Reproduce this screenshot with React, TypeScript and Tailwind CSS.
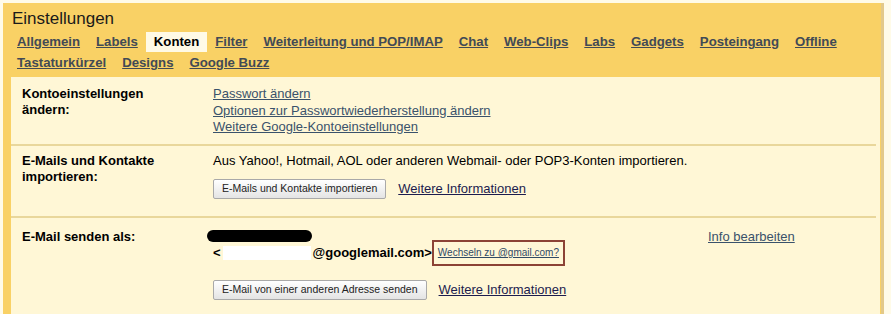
const tabsRow1 = ['Allgemein', 'Labels', 'Konten', 'Filter', 'Weiterleitung und POP/IMAP', 'Chat', 'Web-Clips', 'Labs', 'Gadgets', 'Posteingang', 'Offline']
const tabsRow2 = ['Tastaturkürzel', 'Designs', 'Google Buzz']

const font = "font-['Liberation_Sans',Arial,sans-serif]"

function Tab({ label, active }: { label: string; active?: boolean }) {
  return (
    <div
      className={`flex h-[20px] items-center px-2 text-[13.2px] font-bold ${
        active ? 'bg-[#fffae6] text-black' : 'text-[#424a55] underline'
      }`}
    >
      {label}
    </div>
  )
}

function Button({ children }: { children: string }) {
  return (
    <button className="h-[20px] rounded-[2px] border border-[#a9a9a9] bg-gradient-to-b from-white to-[#e4e4e4] px-[8px] text-[10.5px] text-[#222]">
      {children}
    </button>
  )
}

function Separator() {
  return <div className="mr-[4px] h-[2px] bg-[#e9d79b]" />
}

export default function App() {
  return (
    <div className={`${font} h-[314px] w-[891px] overflow-hidden bg-[#fffbe8] pl-[3px] pt-[3px]`}>
      <div className="h-[330px] w-[881px] border-r-[3px] border-[#e3c98a] bg-[#f9d165] pt-[7px]">
        <h1 className="ml-[9px] h-[18px] text-[17px] leading-[18px] text-[#1a1a1a]">Einstellungen</h1>

        <div className="ml-[6px] mt-[4px] flex">
          {tabsRow1.map((t) => (
            <Tab key={t} label={t} active={t === 'Konten'} />
          ))}
        </div>
        <div className="ml-[6px] mt-[1px] flex">
          {tabsRow2.map((t) => (
            <Tab key={t} label={t} />
          ))}
        </div>

        <div className="ml-[8px] mr-[1px] mt-[4px] h-[260px] bg-[#fff7d6] text-[13px] text-black">
          {/* Kontoeinstellungen */}
          <div className="flex pb-[8px] pl-[11px] pt-[9px]">
            <div className="w-[191px] text-[13px] font-bold leading-[16px]">
              Kontoeinstellungen
              <br />
              ändern:
            </div>
            <div className="flex flex-col text-[13px] leading-[16.5px] text-[#3a526b]">
              <span className="underline">Passwort ändern</span>
              <span className="underline">Optionen zur Passwortwiederherstellung ändern</span>
              <span className="underline">Weitere Google-Kontoeinstellungen</span>
            </div>
          </div>
          <Separator />

          {/* Import */}
          <div className="flex pb-[17px] pl-[11px] pt-[7px]">
            <div className="w-[191px] font-bold leading-[16px]">
              E-Mails und Kontakte
              <br />
              importieren:
            </div>
            <div className="flex flex-col">
              <p className="leading-[16px]">Aus Yahoo!, Hotmail, AOL oder anderen Webmail- oder POP3-Konten importieren.</p>
              <div className="mt-[10px] flex items-center gap-[12px]">
                <Button>E-Mails und Kontakte importieren</Button>
                <span className="text-[#1c1c4e] underline">Weitere Informationen</span>
              </div>
            </div>
          </div>
          <Separator />

          {/* Senden als */}
          <div className="flex pl-[11px] pt-[11px]">
            <div className="w-[191px] font-bold leading-[16px]">E-Mail senden als:</div>
            <div className="flex w-[495px] flex-col">
              <div className="-ml-[6px] mt-[1px] h-[12px] w-[105px] rounded-full bg-black" />
              <div className="-mt-[2px] flex items-center font-bold">
                <span>&lt;</span>
                <span className="ml-[2px] h-[14px] w-[88px] bg-white" />
                <span className="ml-[2px]">@googlemail.com&gt;</span>
                <span className="flex h-[26px] items-center border-2 border-[#8c4335] px-[4px] text-[10px] font-normal text-[#2f4a66] underline">
                  Wechseln zu @gmail.com?
                </span>
              </div>
              <div className="mt-[14px] flex items-center gap-[12px]">
                <Button>E-Mail von einer anderen Adresse senden</Button>
                <span className="text-[#1c1c4e] underline">Weitere Informationen</span>
              </div>
            </div>
            <span className="leading-[16px] text-[#3a526b] underline">Info bearbeiten</span>
          </div>
        </div>
      </div>
    </div>
  )
}
